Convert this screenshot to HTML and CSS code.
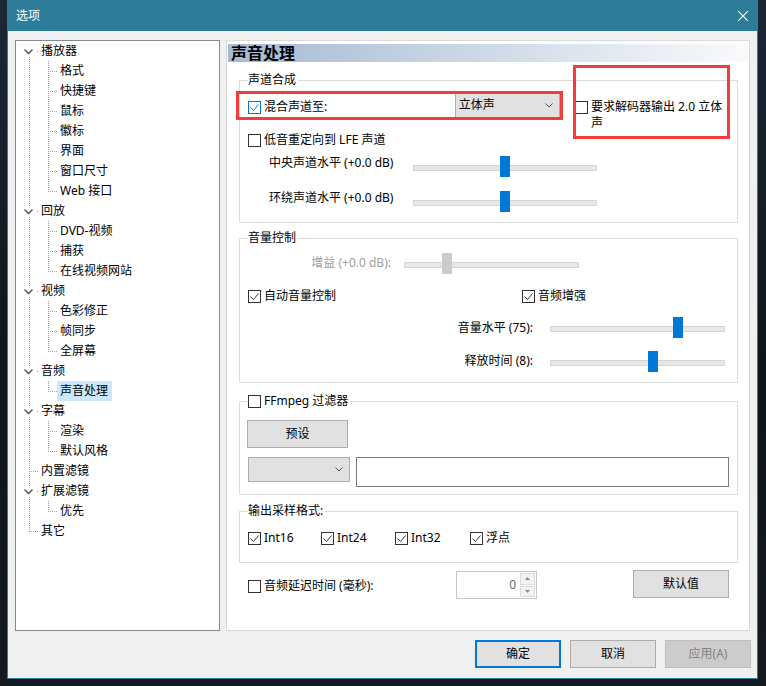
FILE: index.html
```html
<!DOCTYPE html>
<html lang="zh-CN">
<head>
    <meta charset="UTF-8">
    <meta name="viewport" content="width=device-width, initial-scale=1.0">
    <title>选项</title>
    <link rel="stylesheet" href="styles.css">
</head>
<body>
    <!-- tree connector pieces -->
    <svg class="defs" width="0" height="0">
        <symbol id="t-first" viewBox="0 0 22 20">
            <path d="M8.5 8.5l4 4 4-4" fill="none" stroke="#5f5f5f" stroke-width="1.6"/>
            <path d="M13.5 16V20M21 10.5h1" fill="none" stroke="#a0a0a0" stroke-dasharray="1 1"/>
        </symbol>
        <symbol id="t-open" viewBox="0 0 22 20">
            <path d="M8.5 8.5l4 4 4-4" fill="none" stroke="#5f5f5f" stroke-width="1.6"/>
            <path d="M13.5 0V5M13.5 16V20M21 10.5h1" fill="none" stroke="#a0a0a0" stroke-dasharray="1 1"/>
        </symbol>
        <symbol id="t-leaf" viewBox="0 0 22 20">
            <path d="M13.5 0V20M15 10.5H22" fill="none" stroke="#a0a0a0" stroke-dasharray="1 1"/>
        </symbol>
        <symbol id="t-end" viewBox="0 0 22 20">
            <path d="M13.5 0V11M15 10.5H22" fill="none" stroke="#a0a0a0" stroke-dasharray="1 1"/>
        </symbol>
        <symbol id="c-mid" viewBox="0 0 41 20">
            <path d="M13.5 0V20M32.5 0V20M34 10.5H41" fill="none" stroke="#a0a0a0" stroke-dasharray="1 1"/>
        </symbol>
        <symbol id="c-last" viewBox="0 0 41 20">
            <path d="M13.5 0V20M32.5 0V11M34 10.5H41" fill="none" stroke="#a0a0a0" stroke-dasharray="1 1"/>
        </symbol>
        <symbol id="tick" viewBox="0 0 11 11">
            <path d="M1.5 5.5l3 3 5-6" fill="none" stroke="currentColor" stroke-width="1"/>
        </symbol>
        <symbol id="chev" viewBox="0 0 8 5">
            <path d="M0.5 0.5L4 4l3.5-3.5" fill="none" stroke="#555" stroke-width="1"/>
        </symbol>
    </svg>

    <div class="window">
        <div class="titlebar">
            <span class="title">选项</span>
            <svg class="close" viewBox="0 0 10 10"><path d="M0 0L10 10M10 0L0 10" stroke="#fff" stroke-width="1.1"/></svg>
        </div>

        <div class="content">
            <div class="tree">
                <div class="node"><svg class="g"><use href="#t-first"/></svg><span class="label">播放器</span></div>
                <div class="node"><svg class="g2"><use href="#c-mid"/></svg><span class="label">格式</span></div>
                <div class="node"><svg class="g2"><use href="#c-mid"/></svg><span class="label">快捷键</span></div>
                <div class="node"><svg class="g2"><use href="#c-mid"/></svg><span class="label">鼠标</span></div>
                <div class="node"><svg class="g2"><use href="#c-mid"/></svg><span class="label">徽标</span></div>
                <div class="node"><svg class="g2"><use href="#c-mid"/></svg><span class="label">界面</span></div>
                <div class="node"><svg class="g2"><use href="#c-mid"/></svg><span class="label">窗口尺寸</span></div>
                <div class="node"><svg class="g2"><use href="#c-last"/></svg><span class="label">Web 接口</span></div>
                <div class="node"><svg class="g"><use href="#t-open"/></svg><span class="label">回放</span></div>
                <div class="node"><svg class="g2"><use href="#c-mid"/></svg><span class="label">DVD-视频</span></div>
                <div class="node"><svg class="g2"><use href="#c-mid"/></svg><span class="label">捕获</span></div>
                <div class="node"><svg class="g2"><use href="#c-last"/></svg><span class="label">在线视频网站</span></div>
                <div class="node"><svg class="g"><use href="#t-open"/></svg><span class="label">视频</span></div>
                <div class="node"><svg class="g2"><use href="#c-mid"/></svg><span class="label">色彩修正</span></div>
                <div class="node"><svg class="g2"><use href="#c-mid"/></svg><span class="label">帧同步</span></div>
                <div class="node"><svg class="g2"><use href="#c-last"/></svg><span class="label">全屏幕</span></div>
                <div class="node"><svg class="g"><use href="#t-open"/></svg><span class="label">音频</span></div>
                <div class="node"><svg class="g2"><use href="#c-last"/></svg><span class="label selected">声音处理</span></div>
                <div class="node"><svg class="g"><use href="#t-open"/></svg><span class="label">字幕</span></div>
                <div class="node"><svg class="g2"><use href="#c-mid"/></svg><span class="label">渲染</span></div>
                <div class="node"><svg class="g2"><use href="#c-last"/></svg><span class="label">默认风格</span></div>
                <div class="node"><svg class="g"><use href="#t-leaf"/></svg><span class="label">内置滤镜</span></div>
                <div class="node"><svg class="g"><use href="#t-open"/></svg><span class="label">扩展滤镜</span></div>
                <div class="node"><svg class="g2"><use href="#c-last"/></svg><span class="label">优先</span></div>
                <div class="node"><svg class="g"><use href="#t-end"/></svg><span class="label">其它</span></div>
            </div>

            <div class="panel">
                <div class="head">声音处理</div>

                <fieldset class="group mixer">
                    <legend>声道合成</legend>
                    <div class="row mix-row">
                        <label class="check mix-label"><span class="cb focus"><svg><use href="#tick"/></svg></span>混合声道至:</label>
                        <div class="combo stereo">立体声<svg class="chev"><use href="#chev"/></svg></div>
                        <label class="check req"><span class="cb"></span><span class="wrap-text">要求解码器输出 2.0 立体声</span></label>
                    </div>
                    <div class="row lfe-row">
                        <label class="check"><span class="cb"></span>低音重定向到 LFE 声道</label>
                    </div>
                    <div class="row level-row">
                        <span class="level-label">中央声道水平 (+0.0 dB)</span>
                        <div class="slider level-slider"><span class="thumb" style="--v: .5"></span></div>
                    </div>
                    <div class="row level-row second">
                        <span class="level-label">环绕声道水平 (+0.0 dB)</span>
                        <div class="slider level-slider"><span class="thumb" style="--v: .5"></span></div>
                    </div>
                </fieldset>

                <fieldset class="group volume">
                    <legend>音量控制</legend>
                    <div class="row gain-row">
                        <span class="gain-label">增益 (+0.0 dB):</span>
                        <div class="slider short disabled"><span class="thumb" style="--v: .23"></span></div>
                    </div>
                    <div class="row auto-row">
                        <label class="check auto"><span class="cb"><svg><use href="#tick"/></svg></span>自动音量控制</label>
                        <label class="check"><span class="cb"><svg><use href="#tick"/></svg></span>音频增强</label>
                    </div>
                    <div class="row boost-row">
                        <span class="boost-label">音量水平 (75):</span>
                        <div class="slider short boost"><span class="thumb" style="--v: .745"></span></div>
                    </div>
                    <div class="row boost-row release">
                        <span class="boost-label">释放时间 (8):</span>
                        <div class="slider short boost"><span class="thumb" style="--v: .595"></span></div>
                    </div>
                </fieldset>

                <fieldset class="group ffmpeg">
                    <legend><label class="check"><span class="cb"></span>FFmpeg 过滤器</label></legend>
                    <button class="btn preset">预设</button>
                    <div class="row filter-row">
                        <div class="combo filter-combo"><span></span><svg class="chev"><use href="#chev"/></svg></div>
                        <input class="filter-input" type="text">
                    </div>
                </fieldset>

                <fieldset class="group formats">
                    <legend>输出采样格式:</legend>
                    <div class="row format-row">
                        <label class="check fmt-a"><span class="cb"><svg><use href="#tick"/></svg></span>Int16</label>
                        <label class="check fmt-b"><span class="cb"><svg><use href="#tick"/></svg></span>Int24</label>
                        <label class="check fmt-c"><span class="cb"><svg><use href="#tick"/></svg></span>Int32</label>
                        <label class="check"><span class="cb"><svg><use href="#tick"/></svg></span>浮点</label>
                    </div>
                </fieldset>

                <div class="row delay-row">
                    <label class="check delay-label"><span class="cb"></span>音频延迟时间 (毫秒):</label>
                    <div class="spin">
                        <span class="spin-val">0</span>
                        <span class="spin-btns">
                            <span class="spin-btn"><svg viewBox="0 0 5 3"><path d="M0 3L2.5 0L5 3z" fill="#8a8a8a"/></svg></span>
                            <span class="spin-btn"><svg viewBox="0 0 5 3"><path d="M0 0L2.5 3L5 0z" fill="#8a8a8a"/></svg></span>
                        </span>
                    </div>
                    <button class="btn default">默认值</button>
                </div>

                <!-- annotation marks -->
                <div class="mark mark-mix"></div>
                <div class="mark mark-req"></div>
            </div>
        </div>

        <div class="actions">
            <button class="btn action primary">确定</button>
            <button class="btn action">取消</button>
            <button class="btn action off">应用(A)</button>
        </div>
    </div>
</body>
</html>
```

FILE: styles.css
```css
* {
    margin: 0;
    padding: 0;
    box-sizing: border-box;
}

body {
    width: 766px;
    height: 686px;
    overflow: hidden;
    padding-left: 7px;
    background: linear-gradient(180deg, #1c2736 0%, #0f1419 55%, #161a1f 100%);
    font-family: "Noto Sans", "Noto Sans CJK SC", sans-serif;
    font-size: 12px;
    line-height: 16px;
    color: #000;
}

.defs {
    display: block;
    overflow: hidden;
}

.window {
    width: 751px;
    height: 679px;
    background: #f0f0f0;
    border: 1px solid #2c7c9a;
    border-top: 0;
    display: flex;
    flex-direction: column;
}

.titlebar {
    height: 31px;
    flex: none;
    background: #2c7c9a;
    display: flex;
    align-items: center;
    justify-content: space-between;
    padding: 0 9px 0 8px;
}

.title {
    color: #fff;
    font-size: 12px;
}

.close {
    width: 10px;
    height: 10px;
}

.content {
    display: flex;
    gap: 6px;
    padding: 9px 7px 0;
}

/* tree */
.tree {
    width: 205px;
    height: 591px;
    flex: none;
    background: #fff;
    border: 1px solid #828790;
}

.node {
    display: flex;
    height: 20px;
    line-height: 20px;
}

.g {
    width: 22px;
    height: 20px;
    flex: none;
}

.g2 {
    width: 41px;
    height: 20px;
    flex: none;
}

.label {
    padding: 0 3px;
    white-space: nowrap;
}

.label.selected {
    background: #cce8ff;
    padding-right: 4px;
}

/* right panel */
.panel {
    position: relative;
    width: 524px;
    height: 591px;
    flex: none;
    background: #fff;
    border: 1px solid #dadada;
    padding: 3px 1px 0;
}

.head {
    height: 18px;
    padding-left: 3px;
    background: linear-gradient(90deg, #a5bad3 0%, #d3dde9 55%, #f9fafc 100%);
    font-size: 16px;
    font-weight: bold;
    line-height: 18px;
}

.group {
    border: 1px solid #dcdcdc;
    margin: 0 10px 0 11px;
    padding: 0 8px 9px;
    min-width: 0;
}

.group legend {
    padding: 0 2px 0 0;
    line-height: 16px;
}

.mixer { margin-top: 10px; }
.volume { margin-top: 7px; }
.ffmpeg { margin-top: 10px; padding-bottom: 7px; }
.formats { margin-top: 8px; padding-bottom: 16px; }

.row {
    display: flex;
    align-items: flex-start;
}

/* checkbox */
.check {
    display: flex;
    align-items: flex-start;
    white-space: nowrap;
}

.cb {
    width: 13px;
    height: 13px;
    flex: none;
    margin: 2px 3px 0 0;
    border: 1px solid #333;
    background: #fff;
    color: #333;
    display: flex;
    align-items: center;
    justify-content: center;
}

.cb svg {
    width: 11px;
    height: 11px;
}

.cb.focus {
    border-color: #0078d7;
    color: #0078d7;
}

/* combo box */
.combo {
    display: flex;
    align-items: center;
    justify-content: space-between;
    background: #e1e1e1;
    border: 1px solid #adadad;
    padding: 0 6px 0 3px;
}

.chev {
    width: 8px;
    height: 5px;
}

/* 声道合成 */
.mix-row { margin-top: 4px; }

.mix-label {
    width: 208px;
    margin-top: 7px;
}

.stereo {
    width: 106px;
    height: 26px;
}

.req {
    margin: 7px 0 0 15px;
    white-space: normal;
}

.wrap-text {
    width: 138px;
}

.lfe-row { margin-top: 1px; }

.level-row { margin-top: 5px; }
.level-row.second { margin-top: 10px; }

.level-label {
    width: 165px;
    padding-left: 21px;
    line-height: 20px;
    white-space: nowrap;
}

/* sliders */
.slider {
    position: relative;
    height: 22px;
    flex: none;
}

.slider::before {
    content: "";
    display: block;
    height: 4px;
    margin-top: 9px;
    background: #e7e7e7;
    border: 1px solid #d6d6d6;
}

.thumb {
    position: absolute;
    top: 0;
    left: calc(var(--v) * (100% - 10px));
    width: 10px;
    height: 21px;
    background: #0078d7;
}

.slider.disabled .thumb {
    background: #cccccc;
}

.level-slider {
    width: 184px;
    margin-top: 3px;
}

.short {
    width: 175px;
}

/* 音量控制 */
.gain-row { margin-top: 7px; }

.gain-label {
    width: 143px;
    text-align: right;
    line-height: 20px;
    color: #a0a0a0;
    white-space: nowrap;
}

.gain-row .slider {
    margin-left: 13px;
}

.auto-row { margin-top: 13px; }

.auto {
    width: 274px;
}

.boost-row { margin-top: 13px; }
.boost-row.release { margin-top: 12px; }

.boost-label {
    width: 285px;
    text-align: right;
    line-height: 20px;
    margin-top: 1px;
    white-space: nowrap;
}

.release .boost-label {
    margin-top: 0;
}

.boost {
    margin-left: 17px;
}

/* buttons */
.btn {
    font: inherit;
    color: #000;
    background: #e1e1e1;
    border: 1px solid #adadad;
    display: flex;
    align-items: center;
    justify-content: center;
}

.preset {
    width: 101px;
    height: 28px;
    margin: 11px 0 0 -1px;
}

.filter-row { margin-top: 9px; }

.filter-combo {
    width: 102px;
    height: 25px;
}

.filter-input {
    width: 375px;
    height: 30px;
    margin-left: 6px;
    border: 1px solid #7a7a7a;
    background: #fff;
    font: inherit;
}

/* 输出采样格式 */
.format-row { margin-top: 11px; }

.fmt-a { width: 73px; }
.fmt-b { width: 74px; }
.fmt-c { width: 75px; }

/* delay */
.delay-row {
    margin: 7px 19px 0 20px;
}

.delay-label {
    width: 208px;
    margin-top: 8px;
}

.spin {
    width: 81px;
    height: 28px;
    margin-top: 1px;
    display: flex;
    border: 1px solid #c8c8c8;
    background: #fff;
}

.spin-val {
    flex: 1;
    text-align: right;
    padding-right: 4px;
    line-height: 25px;
    color: #6d6d6d;
}

.spin-btns {
    width: 16px;
    display: flex;
    flex-direction: column;
    gap: 1px;
    padding: 1px 1px 1px 0;
}

.spin-btn {
    flex: 1;
    display: flex;
    align-items: center;
    justify-content: center;
    background: #f3f3f3;
    border: 1px solid #dcdcdc;
}

.spin-btn svg {
    width: 5px;
    height: 3px;
}

.default {
    width: 96px;
    height: 28px;
    margin-left: auto;
}

/* annotation */
.mark {
    position: absolute;
    border: 3px solid #f23b3b;
}

.mark-mix {
    left: 9px;
    top: 50px;
    width: 327px;
    height: 29px;
}

.mark-req {
    left: 346px;
    top: 24px;
    width: 157px;
    height: 74px;
}

/* dialog buttons */
.actions {
    display: flex;
    justify-content: flex-end;
    gap: 9px;
    padding: 9px 6px 0;
}

.action {
    width: 86px;
    height: 28px;
}

.action.primary {
    border: 2px solid #0078d7;
}

.action.off {
    background: #cccccc;
    border-color: #bfbfbf;
    color: #838383;
}
```
